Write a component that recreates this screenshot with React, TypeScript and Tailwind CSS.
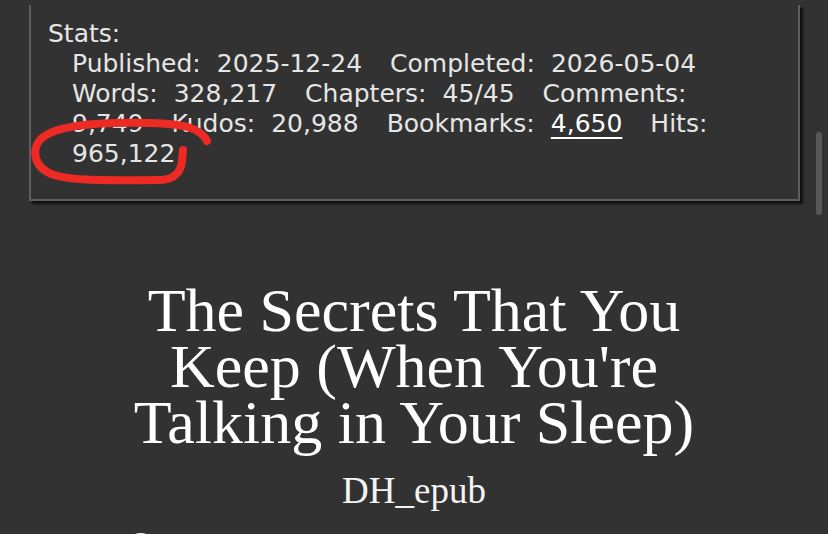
type Stat = { label?: string; value?: string; link?: boolean }

// stats block lines, broken the same way the reader wraps them
const statLines: Stat[][] = [
  [
    { label: 'Published:', value: '2025-12-24' },
    { label: 'Completed:', value: '2026-05-04' },
  ],
  [
    { label: 'Words:', value: '328,217' },
    { label: 'Chapters:', value: '45/45' },
    { label: 'Comments:' },
  ],
  [
    { value: '9,749' },
    { label: 'Kudos:', value: '20,988' },
    { label: 'Bookmarks:', value: '4,650', link: true },
    { label: 'Hits:' },
  ],
  [{ value: '965,122' }],
]

function StatItem({ stat }: { stat: Stat }) {
  return (
    <span className="mr-[28px] last:mr-0">
      {stat.label}
      {stat.value && (
        <span
          className={
            stat.label
              ? stat.link
                ? 'ml-[16px] text-white underline decoration-2 underline-offset-[5px]'
                : 'ml-[16px]'
              : ''
          }
        >
          {stat.value}
        </span>
      )}
    </span>
  )
}

function Scribble() {
  return (
    <svg
      className="pointer-events-none absolute left-0 top-0"
      width="240"
      height="200"
      viewBox="0 0 240 200"
      fill="none"
    >
      <path
        d="M207 141 C200 128 186 124 150 123 C108 122 60 124 43 137 C30 148 33 168 54 175 C76 182 122 180 160 180 C175 180 181 171 182 161 L183 150"
        stroke="#ee2a24"
        strokeWidth="8"
        strokeLinecap="round"
        strokeLinejoin="round"
      />
    </svg>
  )
}

export default function App() {
  return (
    <div className="relative h-[534px] w-[828px] overflow-hidden bg-[#323232]">
      <div className="ml-[29px] mr-[28px] mt-[5px] border-x-2 border-b-2 border-[#5e5e5e] bg-[#323232] pb-[30px] pl-[17px] pt-[14px] shadow-[3px_3px_2px_rgba(0,0,0,0.65)]">
        <div className="font-['DejaVu_Sans',sans-serif] text-[25px] leading-[30px] text-[#e6e6e6]">
          <div>Stats:</div>
          <div className="pl-[24px]">
            {statLines.map((line, i) => (
              <div key={i} className="whitespace-nowrap">
                {line.map((stat, j) => (
                  <StatItem key={j} stat={stat} />
                ))}
              </div>
            ))}
          </div>
        </div>
      </div>

      <h1 className="mx-auto mt-[81px] max-w-[620px] text-center font-['Liberation_Serif',serif] text-[62px] font-normal leading-[56px] text-white">
        The Secrets That You Keep (When You're Talking in Your Sleep)
      </h1>

      <div className="mt-[20px] text-center font-['Liberation_Serif',serif] text-[37px] leading-[42px] text-[#f4f4f4]">
        DH_epub
      </div>

      <div className="mt-[18px] pl-[131px] font-['DejaVu_Sans',sans-serif] text-[28px] leading-[30px] text-[#f2f2f2]">
        Summary:
      </div>

      <Scribble />

      {/* scroll thumb */}
      <div className="absolute left-[816px] top-[132px] h-[83px] w-[6px] rounded-full bg-[#575757]" />
    </div>
  )
}
